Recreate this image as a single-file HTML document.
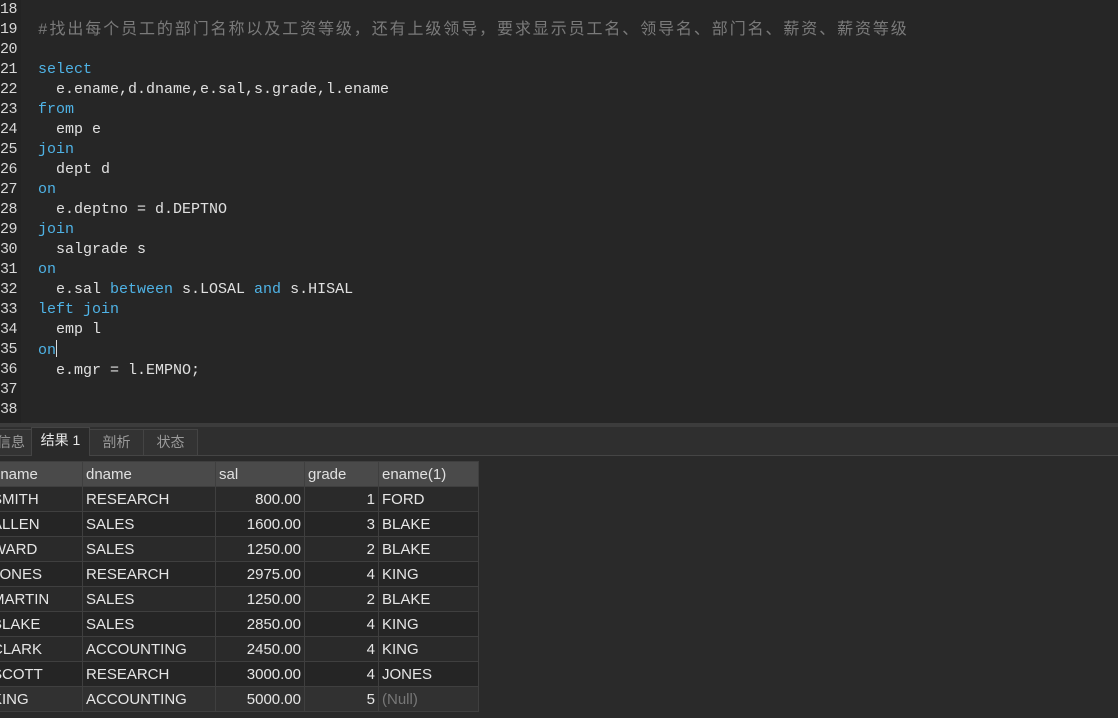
<!DOCTYPE html>
<html><head><meta charset="utf-8"><style>
body{margin:0;width:1118px;height:718px;background:#262626;overflow:hidden;position:relative;font-family:"Liberation Sans","Noto Sans CJK SC",sans-serif}
.ed{position:absolute;left:0;top:0;width:1118px;height:423px;background:#262626}
.gut{position:absolute;left:0;top:0;width:21px;height:423px;background:#232323}
.ln{position:absolute;left:0;font:15px/20px "Liberation Mono",monospace;color:#d8d8d8;letter-spacing:-0.5px}
.code{position:absolute;left:38px;font:15px/20px "Liberation Mono","Noto Sans CJK SC",monospace;color:#e0e0e0;white-space:pre}
.k{color:#4fb3e6}.c{color:#7a7a7a;font-size:16px;letter-spacing:1.9px;display:inline-block;height:20px;line-height:20px;vertical-align:top;overflow:visible}
.cur{display:inline-block;width:1px;height:17px;background:#ddd;vertical-align:-3px}
.div{position:absolute;left:0;top:423px;width:1118px;height:4px;background:#3c3c3c}
.tabs{position:absolute;left:0;top:427px;width:1118px;height:28px;background:#2f2f2f;border-bottom:1px solid #454545}
.tab{position:absolute;top:2px;height:25px;font-size:14px;line-height:25px;color:#9a9a9a;border:1px solid #444;border-bottom:none;text-align:center;background:#333}
.tab.a{top:0;height:28px;background:#2a2a2a;color:#e8e8e8}
.res{position:absolute;left:0;top:456px;width:1118px;height:262px;background:#2a2a2a}
table{position:absolute;left:-12px;top:461px;border-collapse:collapse;font-size:15px;color:#e6e6e6;table-layout:fixed;width:490px}
td{height:24px;padding:0 3px;border:1px solid #3f3f3f;white-space:nowrap;overflow:hidden}
tr.h td{background:#4a4a4a;color:#e0e0e0}
tr:nth-child(even) td{background:#2a2a2a}
tr:nth-child(odd):not(.h) td{background:#252525}
tr.s td{background:#313131}
.r{text-align:right}
.n{color:#777}
</style></head><body>
<div class="ed"><div class="gut"></div>
<div class="ln" style="top:0">18<br>19<br>20<br>21<br>22<br>23<br>24<br>25<br>26<br>27<br>28<br>29<br>30<br>31<br>32<br>33<br>34<br>35<br>36<br>37<br>38</div>
<div class="code" style="top:0">
<span class="c">#找出每个员工的部门名称以及工资等级，还有上级领导，要求显示员工名、领导名、部门名、薪资、薪资等级</span>

<span class="k">select</span>
  e.ename,d.dname,e.sal,s.grade,l.ename
<span class="k">from</span>
  emp e
<span class="k">join</span>
  dept d
<span class="k">on</span>
  e.deptno = d.DEPTNO
<span class="k">join</span>
  salgrade s
<span class="k">on</span>
  e.sal <span class="k">between</span> s.LOSAL <span class="k">and</span> s.HISAL
<span class="k">left join</span>
  emp l
<span class="k">on</span><span class="cur"></span>
  e.mgr = l.EMPNO;
</div></div>
<div class="div"></div>
<div class="tabs">
<div class="tab" style="left:-10px;width:40px">信息</div>
<div class="tab a" style="left:31px;width:57px">结果 1</div>
<div class="tab" style="left:89px;width:53px">剖析</div>
<div class="tab" style="left:143px;width:53px">状态</div>
</div>
<div class="res"></div>
<table>
<colgroup><col style="width:94px"><col style="width:133px"><col style="width:89px"><col style="width:74px"><col style="width:100px"></colgroup>
<tr class="h"><td>ename</td><td>dname</td><td>sal</td><td>grade</td><td>ename(1)</td></tr>
<tr><td>SMITH</td><td>RESEARCH</td><td class="r">800.00</td><td class="r">1</td><td>FORD</td></tr>
<tr><td>ALLEN</td><td>SALES</td><td class="r">1600.00</td><td class="r">3</td><td>BLAKE</td></tr>
<tr><td>WARD</td><td>SALES</td><td class="r">1250.00</td><td class="r">2</td><td>BLAKE</td></tr>
<tr><td>JONES</td><td>RESEARCH</td><td class="r">2975.00</td><td class="r">4</td><td>KING</td></tr>
<tr><td>MARTIN</td><td>SALES</td><td class="r">1250.00</td><td class="r">2</td><td>BLAKE</td></tr>
<tr><td>BLAKE</td><td>SALES</td><td class="r">2850.00</td><td class="r">4</td><td>KING</td></tr>
<tr><td>CLARK</td><td>ACCOUNTING</td><td class="r">2450.00</td><td class="r">4</td><td>KING</td></tr>
<tr><td>SCOTT</td><td>RESEARCH</td><td class="r">3000.00</td><td class="r">4</td><td>JONES</td></tr>
<tr class="s"><td>KING</td><td>ACCOUNTING</td><td class="r">5000.00</td><td class="r">5</td><td class="n">(Null)</td></tr>
</table>
</body></html>
